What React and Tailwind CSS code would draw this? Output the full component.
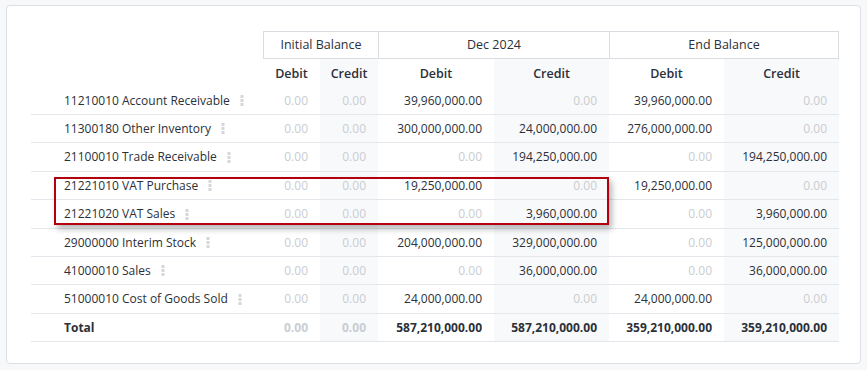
import React from "react";

const rows = [
  { label: "11210010 Account Receivable", v: ["0.00", "0.00", "39,960,000.00", "0.00", "39,960,000.00", "0.00"], h: "h-[28px]" },
  { label: "11300180 Other Inventory", v: ["0.00", "0.00", "300,000,000.00", "24,000,000.00", "276,000,000.00", "0.00"], h: "h-[28px]" },
  { label: "21100010 Trade Receivable", v: ["0.00", "0.00", "0.00", "194,250,000.00", "0.00", "194,250,000.00"], h: "h-[29px]" },
  { label: "21221010 VAT Purchase", v: ["0.00", "0.00", "19,250,000.00", "0.00", "19,250,000.00", "0.00"], h: "h-[28px]" },
  { label: "21221020 VAT Sales", v: ["0.00", "0.00", "0.00", "3,960,000.00", "0.00", "3,960,000.00"], h: "h-[29px]" },
  { label: "29000000 Interim Stock", v: ["0.00", "0.00", "204,000,000.00", "329,000,000.00", "0.00", "125,000,000.00"], h: "h-[28px]" },
  { label: "41000010 Sales", v: ["0.00", "0.00", "0.00", "36,000,000.00", "0.00", "36,000,000.00"], h: "h-[28px]" },
  { label: "51000010 Cost of Goods Sold", v: ["0.00", "0.00", "24,000,000.00", "0.00", "24,000,000.00", "0.00"], h: "h-[29px]" },
];

const totals = ["0.00", "0.00", "587,210,000.00", "587,210,000.00", "359,210,000.00", "359,210,000.00"];

function Dots() {
  return (
    <svg width="4" height="11" viewBox="0 0 4 11" className="ml-[10px] shrink-0">
      <rect x="0.5" y="0" width="3" height="3" rx="0.6" fill="#d3d6da" />
      <rect x="0.5" y="4" width="3" height="3" rx="0.6" fill="#d3d6da" />
      <rect x="0.5" y="8" width="3" height="3" rx="0.6" fill="#d3d6da" />
    </svg>
  );
}

const shaded = [false, true, false, true, false, true];

function NumCell({ value, i, bold, h }) {
  const zero = value === "0.00";
  return (
    <div
      className={`${h} flex items-center justify-end pr-[12px] border-b border-[#e3e6ea] ${shaded[i] ? "bg-[#f8f9fa]" : "bg-white"} ${zero ? "text-[#c9cdd2]" : "text-[#2b3039]"} ${bold ? "font-bold" : ""}`}
    >
      {value}
    </div>
  );
}

export default function App() {
  return (
    <div
      className="w-full h-[370px] bg-[#f7f8f9] pt-[5px] pl-[6px]"
      style={{ fontFamily: '"Open Sans", "Noto Sans", sans-serif' }}
    >
      <div className="w-[855px] h-[359px] bg-white border border-[#dcdfe3] rounded-[4px] pt-[25px] pl-[24px]">
        <div className="relative w-[808px] text-[12px] text-[#2b3039]">
          <div className="grid grid-cols-[232px_57px_58px_116px_115px_115px_115px]">
            {/* group header */}
            <div className="h-[28px]" />
            <div className="col-span-2 h-[28px] flex items-center justify-center border-y border-l border-[#d9dce0] text-[12.5px]">
              Initial Balance
            </div>
            <div className="col-span-2 h-[28px] flex items-center justify-center border-y border-l border-[#d9dce0] text-[12.5px]">
              Dec 2024
            </div>
            <div className="col-span-2 h-[28px] flex items-center justify-center border border-[#d9dce0] text-[12.5px]">
              End Balance
            </div>

            {/* sub header */}
            <div className="h-[28px]" />
            {["Debit", "Credit", "Debit", "Credit", "Debit", "Credit"].map((t, i) => (
              <div
                key={i}
                className={`h-[28px] pt-[2px] flex items-center justify-center font-semibold text-[12.5px] ${shaded[i] ? "bg-[#f8f9fa]" : "bg-white"}`}
              >
                {t}
              </div>
            ))}

            {rows.map((r, ri) => (
              <React.Fragment key={ri}>
                <div className={`${r.h} flex items-center pl-[33px] border-b border-[#e3e6ea]`}>
                  <span>{r.label}</span>
                  <Dots />
                </div>
                {r.v.map((v, i) => (
                  <NumCell key={i} value={v} i={i} h={r.h} />
                ))}
              </React.Fragment>
            ))}

            <div className="h-[28px] flex items-center pl-[33px] border-b border-[#e3e6ea] font-bold">Total</div>
            {totals.map((v, i) => (
              <NumCell key={i} value={v} i={i} bold h="h-[28px]" />
            ))}
          </div>

          {/* highlight overlay */}
          <div className="absolute left-[23px] top-[146px] w-[555px] h-[48px] border-2 border-[#b3000c] shadow-[3px_4px_6px_rgba(0,0,0,0.28)] pointer-events-none" />
        </div>
      </div>
    </div>
  );
}
